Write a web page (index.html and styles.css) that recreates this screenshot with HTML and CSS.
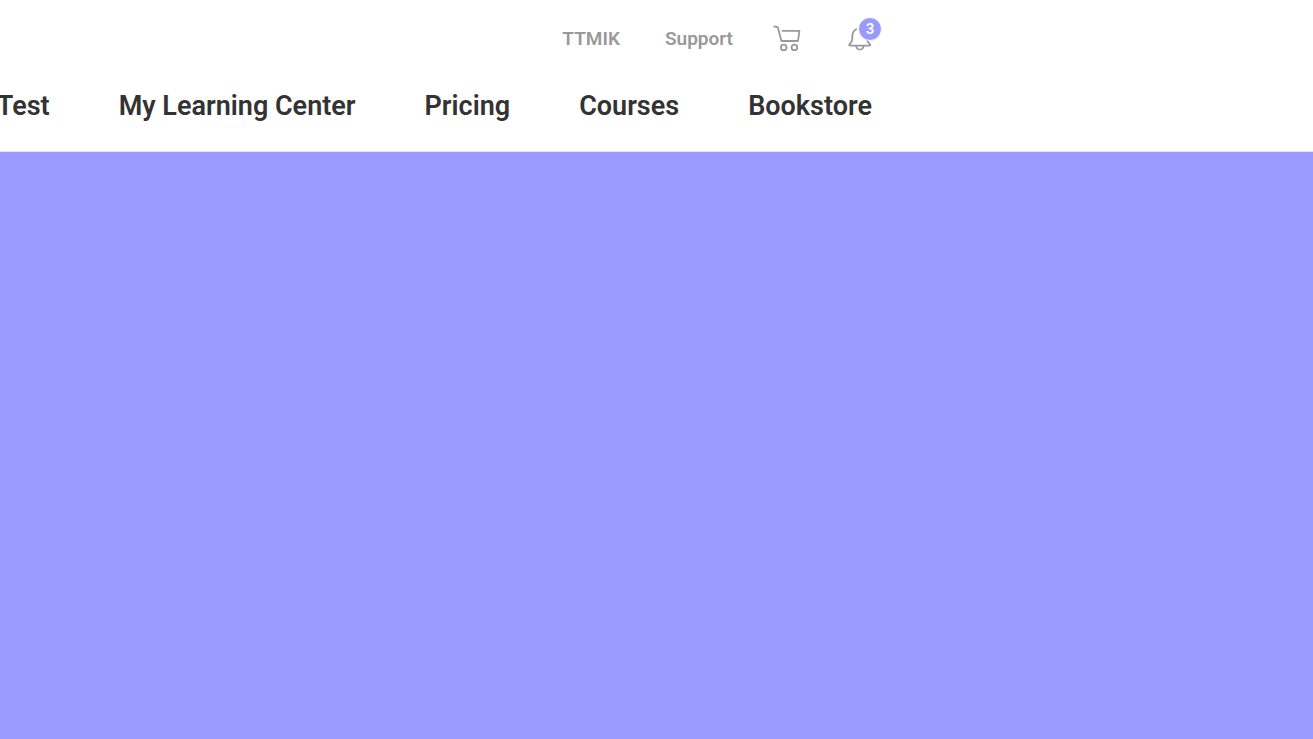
FILE: index.html
```html
<!DOCTYPE html>
<html lang="en">
<head>
<meta charset="utf-8">
<title>TTMIK</title>
<link rel="stylesheet" href="styles.css">
</head>
<body>
<header class="header">
  <nav class="utility" aria-label="Utility">
    <div class="utility-links">
      <a class="utility-link" href="#ttmik">TTMIK</a>
      <a class="utility-link" href="#support">Support</a>
    </div>
    <div class="utility-icons">
      <a class="icon-link" href="#cart" aria-label="Cart">
        <svg width="30" height="30" viewBox="0 0 30 30" fill="none" stroke="#999" stroke-width="1.8" stroke-linecap="round" stroke-linejoin="round">
          <path d="M2.2 2.4 4.9 3Q5.8 3.2 6 4.1L9.4 17H26L27.4 6.8H10.4"/>
          <circle cx="11.7" cy="23.4" r="2.8"/><circle cx="22.4" cy="23.4" r="2.8"/>
        </svg>
      </a>
      <a class="icon-link" href="#notifications" aria-label="Notifications">
        <svg width="30" height="30" viewBox="0 0 30 30" fill="none" stroke="#999" stroke-width="1.8" stroke-linecap="round" stroke-linejoin="round">
          <path d="M10.3 5.2C7.6 6.4 6.4 8.9 6.4 12C6.4 17 5.7 18 3.6 20.2C2.8 21.1 3.2 21.6 4 21.6H23.4C24.3 21.6 24.6 21 23.8 20.2C22.6 19 21.8 18.2 21.3 16.8M10.2 22C10.8 26.8 17 26.8 17.6 22"/>
        </svg>
        <span class="badge">3</span>
      </a>
    </div>
  </nav>
  <nav class="menu" aria-label="Main">
    <a class="menu-link" href="#test">Test</a>
    <a class="menu-link" href="#learning">My Learning Center</a>
    <a class="menu-link" href="#pricing">Pricing</a>
    <a class="menu-link" href="#courses">Courses</a>
    <a class="menu-link" href="#bookstore">Bookstore</a>
  </nav>
</header>
<main class="hero"></main>
</body>
</html>
```
FILE: styles.css
```css
* {
  box-sizing: border-box;
}

body {
  display: flex;
  flex-direction: column;
  min-height: 100vh;
  margin: 0;
  overflow-x: hidden;
  background: #fff;
  font-family: Roboto, "Liberation Sans", sans-serif;
}

a {
  color: inherit;
  text-decoration: none;
}

.header {
  padding: 24px 437px 29px 0;
  border-bottom: 1px solid #e5e5ef;
}

.utility {
  display: flex;
  justify-content: flex-end;
  align-items: center;
  gap: 39px;
  color: #999;
}

.utility-links {
  display: flex;
  gap: 45px;
}

.utility-icons {
  display: flex;
  gap: 44px;
}

.utility-link {
  font-size: 19px;
  line-height: 30px;
  font-weight: 600;
}

.icon-link {
  position: relative;
  display: block;
  height: 30px;
}

.icon-link svg {
  display: block;
}

.badge {
  position: absolute;
  top: -7px;
  right: -6px;
  width: 24px;
  height: 24px;
  border: 1px solid #fff;
  border-radius: 50%;
  background: #99f;
  color: #fff;
  font-size: 15px;
  line-height: 22px;
  font-weight: 600;
  text-align: center;
}

.menu {
  display: flex;
  justify-content: flex-end;
  gap: 69px;
  margin-top: 36px;
  padding-right: 4px;
  color: #333;
}

.menu-link {
  flex: none;
  font-size: 27px;
  line-height: 32px;
  font-weight: 600;
}

.hero {
  flex: 1;
  background: #99f;
}
```
